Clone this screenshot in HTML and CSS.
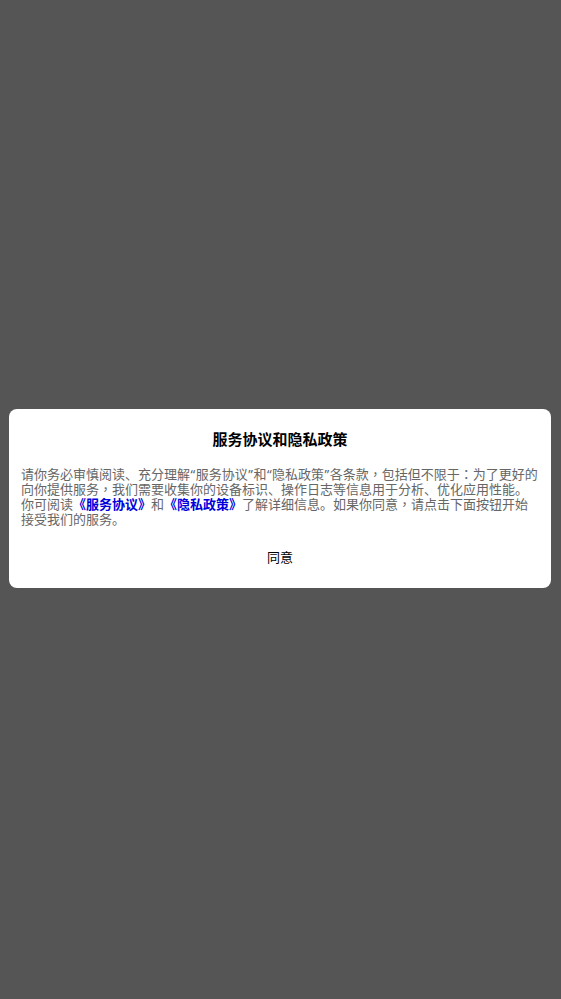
FILE: index.html
```html
<!DOCTYPE html>
<html lang="zh-CN">
<head>
<meta charset="utf-8">
<link rel="stylesheet" href="styles.css">
</head>
<body>
<div class="screen">
  <div class="dialog">
    <div class="title">服务协议和隐私政策</div>
    <p class="text">请你务必审慎阅读、充分理解<span class="q">“</span>服务协议<span class="q">”</span>和<span class="q">“</span>隐私政策<span class="q">”</span>各条款<span class="p" lang="zh-TW">，</span>包括但不限于<span class="p" lang="zh-TW">：</span>为了更好的向你提供服务<span class="p" lang="zh-TW">，</span>我们需要收集你的设备标识、操作日志等信息用于分析、优化应用性能。你可阅读<a class="link">《服务协议》</a>和<a class="link">《隐私政策》</a>了解详细信息。如果你同意<span class="p" lang="zh-TW">，</span>请点击下面按钮开始接受我们的服务。</p>
    <div class="agree">同意</div>
  </div>
</div>
</body>
</html>
```
FILE: styles.css
```css
html, body {
  margin: 0;
  padding: 0;
}
body {
  background: #555555;
  font-family: "Noto Sans", "Noto Sans CJK SC", sans-serif;
}
.screen {
  height: 999px;
  display: flex;
  flex-direction: column;
  justify-content: flex-start;
  padding: 409px 10px 0 9px;
  box-sizing: border-box;
}
.dialog {
  background: #ffffff;
  border-radius: 8px;
  padding: 20px 12px 21px 12px;
  height: 179px;
  box-sizing: border-box;
}
.title {
  text-align: center;
  font-size: 15px;
  font-weight: bold;
  line-height: 20px;
  color: #000;
}
.text {
  margin: 18px 0 0 0;
  font-size: 13px;
  line-height: 15px;
  color: #666666;
}
.q {
  padding: 0 0.5px;
}
.p {
  font-family: inherit;
}
.link {
  color: #0000dd;
  font-weight: bold;
  text-decoration: none;
}
.agree {
  margin-top: 20px;
  text-align: center;
  font-size: 13px;
  line-height: 20px;
  color: #000;
}
```
